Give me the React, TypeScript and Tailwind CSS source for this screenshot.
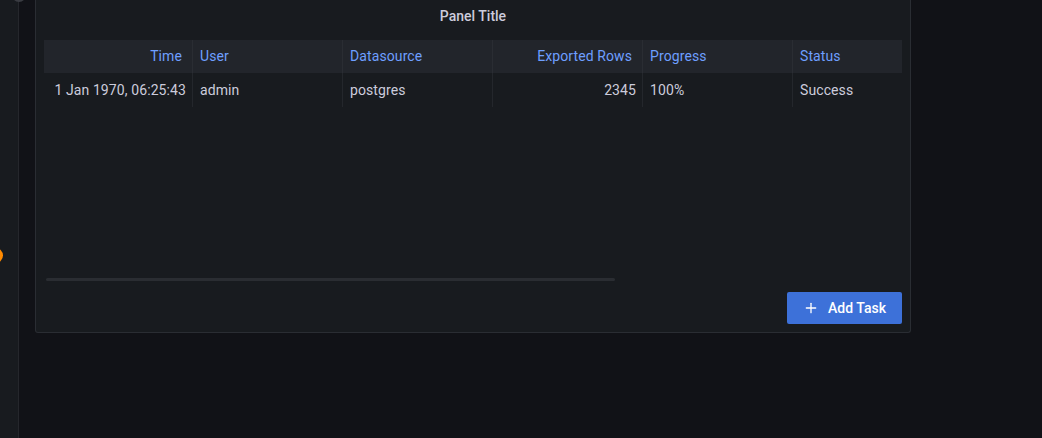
import { Plus } from "lucide-react";

interface Column {
  key: string;
  title: string;
  align: "left" | "right";
}

const columns: Column[] = [
  { key: "time", title: "Time", align: "right" },
  { key: "user", title: "User", align: "left" },
  { key: "datasource", title: "Datasource", align: "left" },
  { key: "rows", title: "Exported Rows", align: "right" },
  { key: "progress", title: "Progress", align: "left" },
  { key: "status", title: "Status", align: "left" },
];

const rows: Record<string, string>[] = [
  {
    time: "1 Jan 1970, 06:25:43",
    user: "admin",
    datasource: "postgres",
    rows: "2345",
    progress: "100%",
    status: "Success",
  },
];

function TasksTable() {
  return (
    <div className="grid grid-cols-[149px_150px_150px_150px_150px_1fr] text-sm tracking-[0.1px] whitespace-nowrap">
      {/* Header */}
      {columns.map((col, i) => (
        <div
          key={col.key}
          className={
            "h-[33px] pb-px flex items-center bg-[#22252b] text-[#6e9fff] " +
            (col.align === "right" ? "justify-end pr-[10px] pl-2 " : "pl-[7px] pr-2 ") +
            (i < columns.length - 1 ? "border-r border-[#2a2d33]" : "")
          }
        >
          {col.title}
        </div>
      ))}

      {/* Body */}
      {rows.map((row, r) =>
        columns.map((col, i) => (
          <div
            key={`${r}-${col.key}`}
            className={
              "h-[34px] flex items-center text-[#ccccdc] " +
              (col.align === "right" ? "justify-end pr-[6px] pl-2 " : "pl-[7px] pr-2 ") +
              (i < columns.length - 1 ? "border-r border-[#24272c]" : "")
            }
          >
            {row[col.key]}
          </div>
        ))
      )}
    </div>
  );
}

export default function App() {
  return (
    <div
      className="relative flex h-[438px] w-[1042px] overflow-hidden bg-[#111217]"
      style={{ fontFamily: "Roboto, 'Noto Sans', sans-serif" }}
    >
      {/* Side menu strip */}
      <div className="relative w-[19px] shrink-0 border-r border-[#25272c] bg-[#181b1f]">
        <div className="absolute -top-[12px] left-[12px] h-[14px] w-[14px] rounded-full bg-[#3a3c42]" />
        <div className="absolute top-[248px] -left-[12px] h-[15px] w-[15px] rounded-full bg-[#ff8a00]" />
      </div>

      <div className="pl-4">
        {/* Panel */}
        <div className="flex h-[333px] w-[876px] flex-col rounded-b-[3px] border border-t-0 border-[#2a2d33] bg-[#181b1f]">
          <div className="flex h-[31px] items-center justify-center text-sm font-medium text-[#ccccdc]">
            Panel Title
          </div>
          <div className="mt-[9px] pl-2 pr-[8px]">
            <TasksTable />
          </div>
          <div className="mt-auto">
            <div className="ml-[10px] h-[3px] w-[569px] rounded-full bg-[#2a2d32]" />
            <div className="flex justify-end pr-2 pt-[11px] pb-[8px]">
              <button
                type="button"
                className="flex h-8 w-[115px] items-center justify-center gap-[9px] rounded-[2px] bg-[#3d71d9] text-sm font-medium text-white"
              >
                <Plus size={16} strokeWidth={2} />
                Add Task
              </button>
            </div>
          </div>
        </div>
      </div>
    </div>
  );
}
